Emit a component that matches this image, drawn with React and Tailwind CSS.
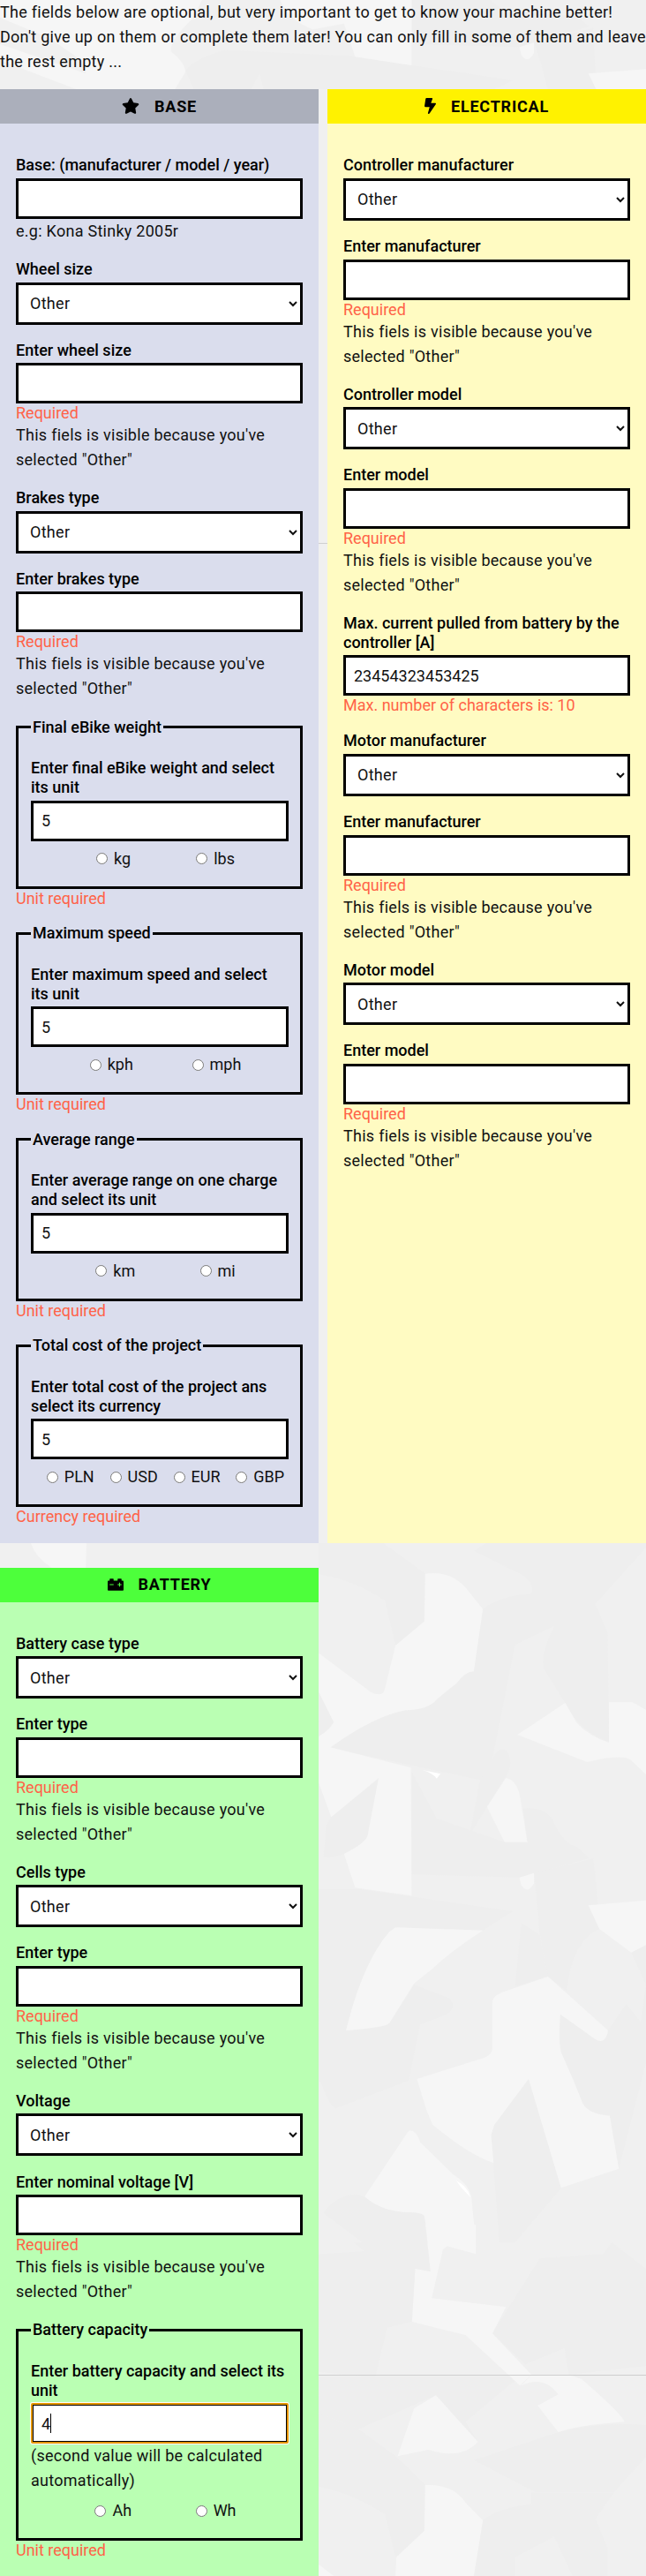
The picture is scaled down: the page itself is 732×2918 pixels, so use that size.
import React from "react";
import { FaStar, FaBolt, FaCarBattery } from "react-icons/fa";

const err = "block leading-[22px] text-[#ff6347]";
const hintText = "leading-7 tracking-[0.27px]";
const inputBox =
  "block h-[46px] w-full rounded-none border-[3px] border-black bg-white px-[9px] text-[#111]";

function Label({ children }) {
  return (
    <label className="block pt-[0.5px] pb-[3.5px] font-medium leading-[22px] text-black">{children}</label>
  );
}

function TextField({ label, value = "", error, hint }) {
  return (
    <div className="mt-[17.6px]">
      <Label>{label}</Label>
      <input className={inputBox} defaultValue={value} />
      {error && <span className={err}>{error}</span>}
      {hint && <p className={hintText}>{hint}</p>}
    </div>
  );
}

function SelectField({ label }) {
  return (
    <div className="mt-[17.6px]">
      <Label>{label}</Label>
      <select className="block h-12 w-full rounded-none border-[3px] border-black bg-white px-[9px] tracking-[0.3px] text-[#111]">
        <option>Other</option>
      </select>
    </div>
  );
}

const otherHint = 'This fiels is visible because you\'ve selected "Other"';

function OtherPair({ select, input }) {
  return (
    <>
      <SelectField label={select} />
      <TextField label={input} error="Required" hint={otherHint} />
    </>
  );
}

function UnitField({ legend, label, units, error, value = "5", hint, focused }) {
  return (
    <div className="mt-[17.6px]">
      <fieldset className="border-[3px] border-black pr-[13px] pb-[17px] pl-[14px]">
        <legend className="px-[2px] font-medium leading-[22px] text-black">{legend}</legend>
        <div className="pt-6">
          <Label>{label}</Label>
          {focused ? (
            <div className="h-[46px] rounded-[2px] border-2 border-[#e59700] bg-white shadow-[0_0_0_1px_white]">
              <div className="flex h-full items-center border border-black px-[9px]">
                {value}
                <span className="h-[22px] w-px bg-black" />
              </div>
            </div>
          ) : (
            <input className={inputBox} defaultValue={value} />
          )}
          {hint && <p className={hintText}>{hint}</p>}
          <div className="-mr-[13px] flex justify-evenly pt-[6px]">
            {units.map((u) => (
              <label key={u} className="flex items-center leading-7">
                <input type="radio" className="mr-[7px] h-[13px] w-[13px]" />
                {u}
              </label>
            ))}
          </div>
        </div>
      </fieldset>
      <span className={err}>{error}</span>
    </div>
  );
}

function Panel({ icon, title, head, body, children }) {
  return (
    <section className={"flex flex-col " + body}>
      <h2
        className={
          "flex h-[39px] items-center justify-center gap-[17px] pb-px font-bold tracking-[0.8px] text-black " + head
        }
      >
        {icon}
        {title}
      </h2>
      <div className="flex-1 px-[18px] pt-[18px] pb-[18.1px]">{children}</div>
    </section>
  );
}

function Shapes({ at, dark = [], light = [], white = [] }) {
  return (
    <g transform={`translate(0 ${at}) scale(0.46684 0.33333)`}>
      {dark.map((d) => (
        <path key={d} d={d} fill="#eeeeee" />
      ))}
      {light.map((d) => (
        <path key={d} d={d} fill="#f6f6f6" />
      ))}
      {white.map((d) => (
        <path key={d} d={d} fill="#ffffff" />
      ))}
    </g>
  );
}

function Backdrop() {
  return (
    <svg className="absolute inset-0 h-full w-full" viewBox="0 0 732 2918">
      <rect width="732" height="2918" fill="#f0f0f0" />
      <Shapes
        at={0}
        dark={[
          "M999 0H1190L1225 40L1400 55L1430 90L1265 160L999 150Z",
          "M862 193L1245 273L1200 303H640L630 250L610 303H470L450 240Q470 200 545 170L850 190Z",
          "M1296 145L1440 95L1447 303H1330L1310 200Z",
        ]}
        light={[
          "M0 0H490L470 60Q410 140 415 175Q450 215 450 245L425 303H185L0 205V150L208 250V215L120 130L0 60Z",
          "M680 0H999V222L862 193L835 80L760 100Q700 70 680 0Z",
          "M1261 160L1296 145V180Q1280 220 1265 185Z",
          "M1428 250L1568 235V303H1447Z",
        ]}
      />
      <Shapes
        at={1740}
        dark={[
          "M774 24H930L1032 128V285L960 372L935 220Q860 150 774 130Z",
          "M802 720Q910 610 985 592Q1040 590 1060 555L1108 500Q1130 460 1150 460L1172 248Q1210 205 1290 195Q1300 150 1250 120L1150 50L1180 24H1568V40L1445 230L1475 330L1478 700Q1420 670 1390 610L1320 450Q1310 410 1345 305L1250 370L1195 760L1170 830Z",
          "M1195 760Q1215 700 1235 740Q1245 790 1225 822L1140 1015L1165 830Z",
          "M804 955L919 825L892 1020Q885 1045 835 1080Q810 1095 785 1090L792 985Z",
          "M774 530L810 632Q800 665 774 682Z",
          "M999 800L1060 960L1225 1040L1280 1040L1270 925Q1330 920 1345 975Q1370 1050 1400 1055L1430 1095L1265 1160L999 1150Z",
          "M1296 1145L1440 1095L1449 1200H1300Z",
        ]}
        light={[
          "M75 24H210L208 108H125Q85 70 75 24Z",
          "M1032 128Q1090 115 1130 175L1172 248L1150 460Q1130 460 1108 500L1060 555Q1040 590 985 592Q910 610 802 718L997 787L999 1222L862 1195L835 1080Q885 1045 892 1020L919 822L804 955L774 840V680Q800 660 810 632L774 530V398L900 530Q930 550 934 520L960 372L1030 290Z",
          "M1256 675L1372 567L1400 635Q1430 680 1478 702V565H1535L1568 590V810L1530 760Q1510 740 1425 768Z",
          "M1228 822Q1255 830 1262 885L1280 1040H1225L1182 920Z",
          "M1261 1160L1296 1145V1180Q1280 1220 1265 1185Z",
        ]}
        white={["M1025 795L1069 808L1060 824Q1050 805 1025 795Z"]}
      />
      <Shapes
        at={2140}
        dark={[
          "M774 0H875L1245 75L1172 140L960 130Q880 250 840 480Q935 470 945 455L1005 325L1090 370Q1110 400 1085 425L1020 460L992 650L815 745Q800 740 780 660L774 650Z",
          "M1300 0H1448L1455 135Q1390 170 1375 345L1330 297L1310 150Z",
          "M1265 115L1310 155L1330 297L1250 330Z",
          "M1532 215L1568 190V590L1502 950L1480 770Q1430 765 1415 730Q1390 640 1362 555Q1355 520 1360 425L1445 510Q1470 530 1476 480L1520 390L1555 450L1568 325Z",
          "M1283 645L1362 1015L1250 1200H1212L1192 835L1200 800Z",
          "M785 1100Q830 1020 885 1045Q930 1100 1000 1098Q1025 1100 1030 1110L1040 1200H880Z",
        ]}
        light={[
          "M960 130L1172 140Q1090 215 1050 270L1005 320L945 455Q935 470 840 480Q880 250 945 145Z",
          "M1330 297L1476 480Q1470 530 1445 510L1360 425Q1355 520 1362 555Q1390 640 1415 730Q1430 765 1480 770L1502 950L1362 1015L1283 645L1200 800L1192 835L1198 930Q1140 905 1050 800L1035 750L1012 645L1170 575Q1195 565 1195 540V385Q1195 360 1230 345Z",
          "M995 820Q1010 820 1020 860L1100 970Q1145 1010 1145 1060L1155 1200H1040L1030 1110Q1025 1100 1000 1098Q930 1100 885 1045L990 825Z",
          "M1428 55L1568 38V190L1532 215L1455 135Z",
        ]}
        white={["M1107 990Q1135 1010 1142 1047L1120 1015Z"]}
      />
      <Shapes
        at={2520}
        dark={[
          "M774 100L885 90L860 60H1040L1045 160L1008 150L1000 330L940 350L910 520L774 500Z",
          "M1310 115L1465 100L1485 60L1568 150V480L1380 510L1370 420L1275 475L1195 370Z",
          "M774 515H1262L1130 670L1160 738L1058 580L870 695L774 640Z",
          "M1150 800L1355 705Q1450 670 1568 680V790L1490 910H1300Z",
          "M870 695L960 787L1032 885V1040L960 1130L935 985Q860 915 774 890V640Z",
          "M1172 1005Q1210 960 1290 950V910H1490L1445 1000L1475 1100V1194H1390L1345 1060L1250 1130V1194H1150Z",
        ]}
        light={[
          "M1033 0H1155V100L1085 73L1075 85L1048 250L1228 280L1195 370L1290 510L1262 547L1130 375L1000 330L1008 150L1045 160Z",
          "M1290 510H1380L1412 525Q1515 650 1515 670Q1410 680 1355 705L1305 615L1355 577Q1320 510 1265 547Z",
          "M1058 580L1160 738Q1120 800 1040 765L965 787L1005 625Z",
          "M1032 885Q1100 880 1130 945L1172 1005L1150 1194H960L962 1130L1030 1040Z",
          "M774 1155L810 1194H774Z",
        ]}
      />
      <rect x="361" y="615" width="10" height="1" fill="#cfcfcf" />
      <rect x="361" y="2690" width="371" height="1" fill="#cfcfcf" />
    </svg>
  );
}

export default function App() {
  return (
    <div className="relative h-[2918px] w-[732px] overflow-hidden font-['Roboto',sans-serif] text-[18px] text-[#111]">
      <Backdrop />
      <main className="relative">
        <p className={hintText + " mr-[-4px]"}>
          The fields below are optional, but very important to get to know your machine better! Don't give up on
          them or complete them later! You can only fill in some of them and leave the rest empty ...
        </p>
        <div className="mt-[17.4px] grid grid-cols-[361px_361px] gap-x-[10px] gap-y-7">
          <Panel
            icon={<FaStar className="h-[18px] w-5" />}
            title="BASE"
            head="bg-[#abafbb]"
            body="bg-[#dadded]"
          >
            <TextField label="Base: (manufacturer / model / year)" hint="e.g: Kona Stinky 2005r" />
            <OtherPair select="Wheel size" input="Enter wheel size" />
            <OtherPair select="Brakes type" input="Enter brakes type" />
            <div className="pt-[0.7px]">
              <UnitField
                legend="Final eBike weight"
                label="Enter final eBike weight and select its unit"
                units={["kg", "lbs"]}
                error="Unit required"
              />
              <UnitField
                legend="Maximum speed"
                label={"Enter maximum speed and select its\u00a0unit"}
                units={["kph", "mph"]}
                error="Unit required"
              />
              <UnitField
                legend="Average range"
                label="Enter average range on one charge and select its unit"
                units={["km", "mi"]}
                error="Unit required"
              />
              <UnitField
                legend="Total cost of the project"
                label="Enter total cost of the project ans select its currency"
                units={["PLN", "USD", "EUR", "GBP"]}
                error="Currency required"
              />
            </div>
          </Panel>
          <Panel
            icon={<FaBolt preserveAspectRatio="none" className="h-[18px] w-[13px]" />}
            title="ELECTRICAL"
            head="bg-[#fff200]"
            body="bg-[#fffbc2]"
          >
            <OtherPair select="Controller manufacturer" input="Enter manufacturer" />
            <OtherPair select="Controller model" input="Enter model" />
            <TextField
              label="Max. current pulled from battery by the controller [A]"
              value="23454323453425"
              error="Max. number of characters is: 10"
            />
            <OtherPair select="Motor manufacturer" input="Enter manufacturer" />
            <OtherPair select="Motor model" input="Enter model" />
          </Panel>
          <Panel
            icon={<FaCarBattery className="h-[18px] w-[18px]" />}
            title="BATTERY"
            head="bg-[#4dff3b]"
            body="bg-[#baffb3]"
          >
            <OtherPair select="Battery case type" input="Enter type" />
            <OtherPair select="Cells type" input="Enter type" />
            <OtherPair select="Voltage" input="Enter nominal voltage [V]" />
            <div className="pt-[0.7px]">
              <UnitField
                legend="Battery capacity"
                label="Enter battery capacity and select its unit"
                value="4"
                focused
                hint="(second value will be calculated automatically)"
                units={["Ah", "Wh"]}
                error="Unit required"
              />
            </div>
          </Panel>
        </div>
      </main>
    </div>
  );
}
